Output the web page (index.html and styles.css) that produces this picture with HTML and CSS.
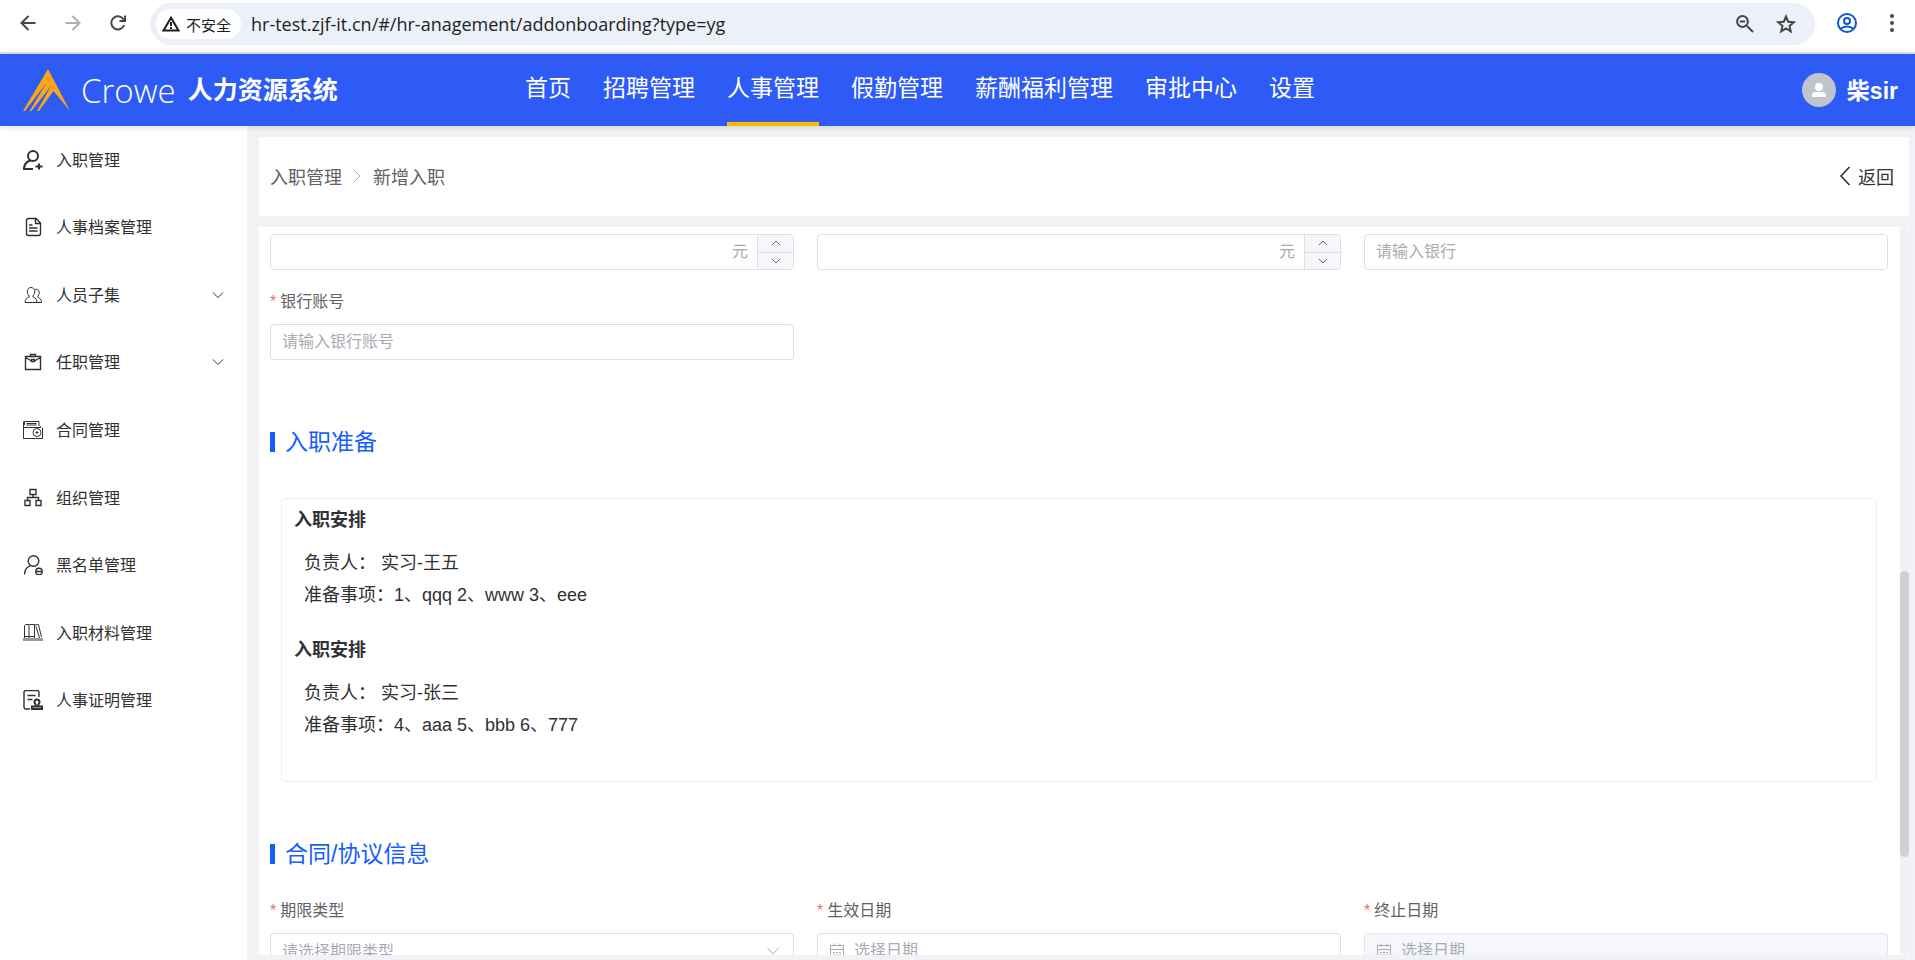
FILE: index.html
```
<!DOCTYPE html>
<html lang="zh-CN">
<head>
    <meta charset="UTF-8">
    <meta name="viewport" content="width=device-width, initial-scale=1.0">
    <title>人力资源系统</title>
    <link rel="stylesheet" href="styles.css">
</head>
<body>
    <!-- browser bar -->
    <div class="browser">
        <div class="browser-nav">
            <button class="icon-btn" aria-label="后退"><svg width="16" height="16" viewBox="0 0 16 16"><path d="M15.5 8H2M8.5 1L1.5 8l7 7"/></svg></button>
            <button class="icon-btn muted" aria-label="前进"><svg width="16" height="16" viewBox="0 0 16 16"><path d="M.5 8H14M7.5 1l7 7-7 7"/></svg></button>
            <button class="icon-btn" aria-label="刷新"><svg width="16" height="16" viewBox="0 0 16 16"><path d="M14.2 10A6.6 6.6 0 1 1 13.3 4L15 6M15 .5V6H9.5"/></svg></button>
        </div>
        <div class="address">
            <button class="secure"><svg width="18" height="16" viewBox="0 0 18 16"><path d="M9 1.7L1.5 14.5h15zM9 6v4M9 11v2"/></svg>不安全</button>
            <input class="url" type="text" aria-label="地址" value="hr-test.zjf-it.cn/#/hr-anagement/addonboarding?type=yg">
            <button class="icon-btn" aria-label="缩放"><svg width="18" height="18" viewBox="0 0 18 18"><path d="M11 11l6 6M3.800 6.500h5.400"/><circle cx="6.500" cy="6.500" r="5.400"/></svg></button>
            <button class="icon-btn" aria-label="收藏"><svg width="20" height="20" viewBox="0 0 20 20"><path d="M10 2.500l2.200 5.200 5.600.5-4.300 3.700 1.300 5.500-4.800-2.900-4.800 2.900 1.300-5.500L2.200 8.200l5.600-.5z"/></svg></button>
        </div>
        <button class="icon-btn account" aria-label="账户"><svg width="20" height="20" viewBox="0 0 20 20"><circle cx="10" cy="10" r="9"/><circle cx="10" cy="8" r="3"/><path d="M3.500 16c3.500-3.500 9.500-3.500 13 0"/></svg></button>
        <button class="icon-btn" aria-label="菜单"><svg width="6" height="20" viewBox="0 0 6 20"><g class="fill"><circle cx="3" cy="3" r="2"/><circle cx="3" cy="10" r="2"/><circle cx="3" cy="17" r="2"/></g></svg></button>
    </div>

    <header class="header">
        <div class="brand">
            <svg class="logo" width="48" height="42" viewBox="0 0 48 42"><path d="M25 0l22 42L30.500 22 16 42h-2l14-25L8.500 42h-2l17-28L2 42H0z"/></svg>
            <span class="brand-name">Crowe</span>
            <h1>人力资源系统</h1>
        </div>
        <nav class="top-nav">
            <a href="#">首页</a>
            <a href="#">招聘管理</a>
            <a href="#" class="active">人事管理</a>
            <a href="#">假勤管理</a>
            <a href="#">薪酬福利管理</a>
            <a href="#">审批中心</a>
            <a href="#">设置</a>
        </nav>
        <div class="user">
            <svg width="34" height="34" viewBox="0 0 34 34"><circle cx="17" cy="17" r="17" fill="#c0c4cc"/><circle cx="17" cy="14" r="4"/><path d="M10 24v-1.500Q10 19 13.500 19h7q3.500 0 3.500 3.500V24z"/></svg>
            <span>柴sir</span>
        </div>
    </header>

    <div class="layout">
        <aside class="sidebar">
            <ul>
                <li><a href="#"><svg width="20" height="20" viewBox="0 0 20 20"><g class="thick"><circle cx="10" cy="6" r="5"/><path d="M1 19c0-4.500 3-7.500 6.500-8.500M0 19h10M12.500 16.500h7M16 13.500v6"/></g></svg><span>入职管理</span></a></li>
                <li><a href="#"><svg width="20" height="20" viewBox="0 0 20 20"><path class="medium" d="M5.500 1.500h7.500l4.500 4.500v10.500a2 2 0 0 1-2 2h-10a2 2 0 0 1-2-2v-13a2 2 0 0 1 2-2zM12.500 1.500v5h5M6 8h3.500M6 11h8.500M6 14h8.500"/></svg><span>人事档案管理</span></a></li>
                <li><a href="#"><svg width="20" height="20" viewBox="0 0 20 20"><path d="M2 17.500c0-3 1.500-4.500 4-5.500l.3-1C3 8 4 2.500 8 2.500s5.200 5.500 1.800 8.500l.2 1c2.500 1 4 2.500 4 5.500zM11.500 4.500c4-1.500 6.500 3 3.300 6.800l.2 1c2.500 1.200 3.500 2.700 3.500 5.200H14"/></svg><span>人员子集</span></a><svg class="arrow" width="12" height="12" viewBox="0 0 12 12"><path d="M1 3.500l5 5 5-5"/></svg></li>
                <li><a href="#"><svg width="20" height="20" viewBox="0 0 20 20"><path class="medium" d="M2.500 4.500h15v13h-15zM7.500 4.500v-2h5v2M2.500 5.500l6 3.500M17.500 5.500l-6 3.500M8.500 7.500h3v2h-3z"/></svg><span>任职管理</span></a><svg class="arrow" width="12" height="12" viewBox="0 0 12 12"><path d="M1 3.500l5 5 5-5"/></svg></li>
                <li><a href="#"><svg width="20" height="20" viewBox="0 0 20 20"><path d="M.5 1.500v17h19v-11M.5 7.500h17V6M1.500 5V1.500h14.500V6M3.500 3.500h10M3.500 5h10"/><circle cx="14" cy="12.500" r="4"/><path d="M12.500 12.500h3M14 11v3"/></svg><span>合同管理</span></a></li>
                <li><a href="#"><svg width="20" height="20" viewBox="0 0 20 20"><path class="medium" d="M7 1.500h6v5H7zM2 12.500h5v5H2zM13 12.500h5v5h-5zM10 6.500v3M4.500 12.500v-3h11v3"/></svg><span>组织管理</span></a></li>
                <li><a href="#"><svg width="20" height="20" viewBox="0 0 20 20"><g class="medium"><circle cx="10.500" cy="6" r="5.300"/><path d="M1.500 19.500c0-4.500 2-7.500 6-8.800M12.500 16.500h7"/><circle cx="16" cy="16.500" r="3.200"/></g></svg><span>黑名单管理</span></a></li>
                <li><a href="#"><svg width="20" height="20" viewBox="0 0 20 20"><path d="M1.500 15V2.500l1-1h3.500V15M6.500 1.500h5V15M11.500 2l4-.5 3 12.500M13 3.500L16.500 15M2 13.500h9"/><path class="shelf" d="M0 16.500h20"/></svg><span>入职材料管理</span></a></li>
                <li><a href="#"><svg width="20" height="20" viewBox="0 0 20 20"><path class="medium" d="M7 19H3a2 2 0 0 1-2-2V2.500a2 2 0 0 1 2-2h11a2 2 0 0 1 2 2V7M4.500 5.500h8M4.500 9.500h5"/><path class="stamp" d="M14 9.500a2.500 2.500 0 0 1 2.500 2.500q0 1.500-1.200 2.500l.2 1.500M14 9.500a2.500 2.500 0 0 0-2.500 2.500q0 1.500 1.200 2.500l-.2 1.500M9 16.500h10v2.500H9z"/></svg><span>人事证明管理</span></a></li>
            </ul>
        </aside>

        <main class="main">
            <div class="page-head">
                <div class="breadcrumb">
                    <a href="#">入职管理</a>
                    <svg width="9" height="16" viewBox="0 0 9 16"><path d="M1 2l6 6-6 6"/></svg>
                    <span>新增入职</span>
                </div>
                <button class="back"><svg width="12" height="20" viewBox="0 0 12 20"><path d="M10.500 1L2 10l8.500 9"/></svg>返回</button>
            </div>

            <div class="panel">
                <form class="panel-body">
                    <div class="form-grid">
                        <div class="number">
                            <input type="text" aria-label="金额">
                            <span class="unit">元</span>
                            <div class="steps">
                                <button type="button" aria-label="增加"><svg width="12" height="12" viewBox="0 0 12 12"><path d="M2 8l4-4 4 4"/></svg></button>
                                <button type="button" aria-label="减少"><svg width="12" height="12" viewBox="0 0 12 12"><path d="M2 4l4 4 4-4"/></svg></button>
                            </div>
                        </div>
                        <div class="number">
                            <input type="text" aria-label="金额">
                            <span class="unit">元</span>
                            <div class="steps">
                                <button type="button" aria-label="增加"><svg width="12" height="12" viewBox="0 0 12 12"><path d="M2 8l4-4 4 4"/></svg></button>
                                <button type="button" aria-label="减少"><svg width="12" height="12" viewBox="0 0 12 12"><path d="M2 4l4 4 4-4"/></svg></button>
                            </div>
                        </div>
                        <input class="field" type="text" aria-label="银行" placeholder="请输入银行">
                        <div class="form-item">
                            <label for="account">银行账号</label>
                            <input class="field" id="account" type="text" placeholder="请输入银行账号">
                        </div>
                    </div>

                    <h2>入职准备</h2>
                    <div class="plan-box">
                        <section class="plan">
                            <h3>入职安排</h3>
                            <p>负责人： 实习-王五</p>
                            <p>准备事项：1、qqq 2、www 3、eee</p>
                        </section>
                        <section class="plan">
                            <h3>入职安排</h3>
                            <p>负责人： 实习-张三</p>
                            <p>准备事项：4、aaa 5、bbb 6、777</p>
                        </section>
                    </div>

                    <h2>合同/协议信息</h2>
                    <div class="form-grid">
                        <div class="form-item">
                            <label for="term">期限类型</label>
                            <div class="select">
                                <select class="field" id="term"><option>请选择期限类型</option></select>
                                <svg width="14" height="14" viewBox="0 0 14 14"><path d="M1.500 4L7 10l5.500-6"/></svg>
                            </div>
                        </div>
                        <div class="form-item">
                            <label for="start">生效日期</label>
                            <div class="date">
                                <svg width="14" height="16" viewBox="0 0 14 16"><path d="M.5 2.500h13v12H.5zM.5 6.500h13M4 .5v3M10 .5v3M3 9.500h2M6 9.500h2M9 9.500h2M3 12h2M6 12h2M9 12h2"/></svg>
                                <input id="start" type="text" placeholder="选择日期">
                            </div>
                        </div>
                        <div class="form-item">
                            <label for="end">终止日期</label>
                            <div class="date disabled">
                                <svg width="14" height="16" viewBox="0 0 14 16"><path d="M.5 2.500h13v12H.5zM.5 6.500h13M4 .5v3M10 .5v3M3 9.500h2M6 9.500h2M9 9.500h2M3 12h2M6 12h2M9 12h2"/></svg>
                                <input id="end" type="text" placeholder="选择日期" disabled>
                            </div>
                        </div>
                    </div>
                </form>
                <div class="track"><div class="thumb"></div></div>
            </div>
        </main>
    </div>
</body>
</html>
```
FILE: styles.css
```
* { box-sizing: border-box; }
body {
    margin: 0;
    height: 100vh;
    display: flex;
    flex-direction: column;
    overflow: hidden;
    font-family: "Liberation Sans", Arial, "Noto Sans CJK SC", sans-serif;
    font-size: 16px;
    color: #303133;
    background: #f0f2f5;
}
h1, h2, h3, p, ul { margin: 0; padding: 0; }
li { list-style: none; }
a { color: inherit; text-decoration: none; }
button, input, select { font: inherit; color: inherit; border: none; background: none; padding: 0; margin: 0; outline: none; }
button { cursor: pointer; }
svg { display: block; flex: none; fill: none; stroke: currentColor; }

/* browser bar */
.browser { display: flex; align-items: center; height: 54px; padding: 0 20px 6px 20px; background: #fff; border-bottom: 2px solid #dfe1e5; font-family: "Open Sans", "Noto Sans CJK SC", sans-serif; }
.browser-nav { display: flex; gap: 29px; margin-right: 24px; }
.icon-btn { color: #474747; stroke-width: 2; }
.icon-btn.muted { color: #b0b0b0; }
.icon-btn .fill { fill: currentColor; stroke: none; }
.address { flex: 1; display: flex; align-items: center; gap: 22px; height: 42px; margin-top: 2px; padding: 0 19px 0 6px; border-radius: 21px; background: #ecf0f9; }
.secure { display: flex; align-items: center; gap: 6px; height: 30px; padding: 0 10px 0 6px; border-radius: 15px; background: #fff; font-size: 15px; color: #1f1f1f; stroke-width: 2; }
.url { flex: 1; min-width: 0; margin-left: -12px; font-size: 18px; color: #1f1f1f; }
.account { margin: 0 32px 0 22px; color: #0b57d0; }

/* header */
.header { display: flex; align-items: stretch; height: 72px; padding: 0 17px 0 23px; background: #2e5bf6; color: #fff; box-shadow: 0 1px 6px rgba(0, 21, 41, .15); position: relative; }
.brand { display: flex; align-items: center; width: 502px; }
.logo { fill: #f9a61a; stroke: none; }
.brand-name { margin: 0 12px 0 10px; font: 300 33px "Open Sans", sans-serif; }
.brand h1 { font-size: 25px; line-height: 36px; }
.top-nav { flex: 1; display: flex; gap: 32px; font-size: 23px; line-height: 68px; }
.top-nav .active { border-bottom: 4px solid #ffba00; }
.user { display: flex; align-items: center; gap: 11px; font-size: 23px; font-weight: bold; }
.user span { padding-bottom: 2px; }
.user svg { fill: #fff; stroke: none; }

.layout { flex: 1; display: flex; min-height: 0; }

/* sidebar */
.sidebar { width: 247px; background: #fff; }
.sidebar ul { display: grid; grid-auto-rows: 1fr; height: 608px; }
.sidebar li { display: flex; align-items: center; justify-content: space-between; padding: 0 23px; }
.sidebar a { display: flex; align-items: center; gap: 13px; }
.sidebar span { padding-bottom: 2px; }
.sidebar .thick { stroke-width: 2; }
.sidebar .medium { stroke-width: 1.4; }
.sidebar .shelf { stroke: #999; stroke-width: 3; }
.sidebar .stamp { stroke-width: 2; }

/* content */
.main { flex: 1; display: flex; flex-direction: column; gap: 11px; min-width: 0; padding: 11px 6px 5px 12px; }
.page-head { display: flex; align-items: center; justify-content: space-between; height: 79px; padding: 0 15px 2px 11px; background: #fff; font-size: 18px; }
.breadcrumb { display: flex; align-items: center; gap: 11px; color: #606266; }
.breadcrumb svg { color: #a8abb2; }
.back { display: flex; align-items: center; gap: 7px; stroke-width: 1.6; }
.panel { flex: 1; display: flex; min-height: 0; overflow: hidden; background: #fff; }
.panel-body { flex: 1; min-width: 0; padding: 7px 12px 0 11px; }
.track { width: 9px; padding-top: 344px; border-radius: 5px; background: #f1f1f1; }
.thumb { height: 286px; border-radius: 5px; background: #cfd0d3; }

.form-grid { display: grid; grid-template-columns: repeat(3, 1fr); column-gap: 23px; row-gap: 14px; }
.form-item label { display: block; height: 40px; line-height: 36px; color: #606266; }
.form-item label::before { content: "*"; margin-right: 4px; color: #f56c6c; }
.field, .number, .date { width: 100%; height: 36px; border: 1px solid #dcdfe6; border-radius: 4px; background: #fff; }
.field { padding: 0 11px; }
::placeholder { color: #a8abb2; opacity: 1; }
.number { display: flex; overflow: hidden; }
.number input { flex: 1; min-width: 0; padding-left: 11px; }
.unit { padding-right: 9px; line-height: 34px; color: #a8abb2; }
.steps { display: flex; flex-direction: column; width: 36px; border-left: 1px solid #dcdfe6; background: #f5f7fa; color: #606266; }
.steps button { flex: 1; display: flex; align-items: center; justify-content: center; }
.steps button + button { border-top: 1px solid #dcdfe6; }
.select { display: grid; align-items: center; color: #a8abb2; }
.select > * { grid-area: 1 / 1; }
.select select { appearance: none; }
.select svg { justify-self: end; margin-right: 14px; pointer-events: none; }
.date { display: flex; align-items: center; gap: 10px; padding: 0 12px; color: #a8abb2; }
.date input { flex: 1; min-width: 0; }
.date.disabled { background: #f5f7fa; border-color: #e4e7ed; }

h2 { display: flex; align-items: center; gap: 10px; margin-top: 64px; font-size: 23px; font-weight: normal; line-height: 36px; color: #165dff; }
h2::before { content: ""; width: 5px; height: 20px; background: #165dff; }
.plan-box { margin: 38px 11px 0; padding: 5px 12px 17px; border: 1px solid #ebeef5; border-radius: 4px; font-size: 18px; line-height: 32px; }
.plan { padding-bottom: 23px; }
.plan h3 { margin-bottom: 11px; font-size: 18px; }
.plan p { padding-left: 10px; }
.plan-box + h2 { margin-top: 54px; margin-bottom: 21px; }
```
